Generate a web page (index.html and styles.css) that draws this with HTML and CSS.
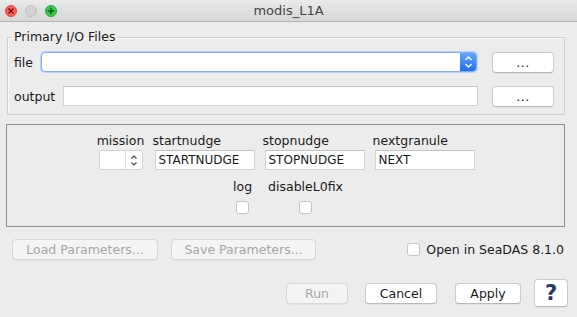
FILE: index.html
```html
<!doctype html>
<html lang="en">
<head>
  <meta charset="utf-8">
  <title>modis_L1A</title>
  <link rel="stylesheet" href="styles.css">
</head>
<body>

	<div class="window">
		<div class="titlebar">
			<div class="lights">
				<span class="light close"><svg width="8" height="8" viewBox="0 0 8 8"><path d="M1.5 1.5 L6.5 6.5 M6.5 1.5 L1.5 6.5" stroke="#6b0e0c" stroke-width="1.3"/></svg></span>
				<span class="light mini"></span>
				<span class="light zoom"><svg width="8" height="8" viewBox="0 0 8 8"><path d="M4 0.8 V7.2 M0.8 4 H7.2" stroke="#0b5a13" stroke-width="1.4"/></svg></span>
			</div>
			<div class="title">modis_L1A</div>
		</div>

		<div class="content">

			<fieldset class="group">
				<legend>Primary I/O Files</legend>
				<div class="io-row">
					<label>file</label>
					<div class="combo">
						<div class="combo-text"></div>
						<div class="combo-arrow">
							<svg width="9" height="14" viewBox="0 0 9 14"><path d="M1.5 5 L4.5 2 L7.5 5 M1.5 9 L4.5 12 L7.5 9" fill="none" stroke="#fff" stroke-width="1.4"/></svg>
						</div>
					</div>
					<button class="btn browse">...</button>
				</div>
				<div class="io-row">
					<label>output</label>
					<div class="field wide"></div>
					<button class="btn browse">...</button>
				</div>
			</fieldset>

			<div class="params">
				<div class="param-row">
					<div class="param narrow">
						<label>mission</label>
						<div class="spinner">
							<div class="spin-text"></div>
							<div class="spin-arrow">
								<svg width="8" height="13" viewBox="0 0 8 13"><path d="M1.5 4.5 L4 2 L6.5 4.5 M1.5 8.5 L4 11 L6.5 8.5" fill="none" stroke="#444" stroke-width="1.1"/></svg>
							</div>
						</div>
					</div>
					<div class="param">
						<label>startnudge</label>
						<div class="field">STARTNUDGE</div>
					</div>
					<div class="param">
						<label>stopnudge</label>
						<div class="field">STOPNUDGE</div>
					</div>
					<div class="param">
						<label>nextgranule</label>
						<div class="field">NEXT</div>
					</div>
				</div>
				<div class="param-row flags">
					<div class="flag">
						<label>log</label>
						<span class="check"></span>
					</div>
					<div class="flag">
						<label>disableL0fix</label>
						<span class="check"></span>
					</div>
				</div>
			</div>

			<div class="load-row">
				<button class="btn disabled load">Load Parameters...</button>
				<button class="btn disabled save">Save Parameters...</button>
				<div class="open-seadas">
					<span class="check"></span>
					<span>Open in SeaDAS 8.1.0</span>
				</div>
			</div>

			<div class="action-row">
				<button class="btn disabled run">Run</button>
				<button class="btn cancel">Cancel</button>
				<button class="btn apply">Apply</button>
				<button class="btn help">?</button>
			</div>

		</div>
	</div>

</body>
</html>
```

FILE: styles.css
```css
html, body {
	margin			: 0;
	padding			: 0;
}

body {
	width			: 577px;
	height			: 317px;
	background		: #ececec;
	font-family		: "DejaVu Sans", "Liberation Sans", sans-serif;
	font-size		: 12.5px;
	color			: #1a1a1a;
	overflow		: hidden;
}

/* Title bar
   =================================================================== */

.titlebar {
	height			: 21px;
	background		: linear-gradient(#ebebeb, #d6d6d6);
	border-bottom	: 1px solid #b4b4b4;
	display			: flex;
	align-items		: center;
	position		: relative;
}

.lights {
	display			: flex;
	gap				: 8px;
	padding-left	: 5px;
}

.light {
	width			: 12px;
	height			: 12px;
	border-radius	: 50%;
	box-sizing		: border-box;
	display			: flex;
	align-items		: center;
	justify-content	: center;
}

.light.close {
	background		: #fc5f57;
	border			: 1px solid #df4744;
}

.light.mini {
	background		: #d3d3d3;
	border			: 1px solid #c2c2c2;
}

.light.zoom {
	background		: #35c94a;
	border			: 1px solid #24a73a;
}

.title {
	position		: absolute;
	left			: 0;
	right			: 0;
	text-align		: center;
	font-size		: 13px;
	color			: #444;
	pointer-events	: none;
}

/* Content
   =================================================================== */

.content {
	padding			: 7px 12px 0 6px;
}

.group {
	margin			: 0 0 0 1px;
	padding			: 7px 10px 8px 6px;
	border			: 1px solid #cdcdcd;
	box-shadow		: inset 1px 1px 0 #f8f8f8;
	min-width		: 0;
}

.group legend {
	padding			: 0 2px;
	margin-left		: -2px;
	line-height		: 16px;
}

.io-row {
	display			: flex;
	align-items		: center;
	height			: 20px;
}

.io-row + .io-row {
	margin-top		: 14px;
}

.io-row label {
	margin-right	: 8px;
}

.combo {
	flex			: 1;
	height			: 20px;
	display			: flex;
	border			: 1px solid #7fb0f5;
	border-radius	: 4px;
	box-shadow		: 0 0 0 1px #b7d3fa;
	background		: #fff;
	overflow		: hidden;
	box-sizing		: border-box;
}

.combo-text {
	flex			: 1;
}

.combo-arrow {
	width			: 16px;
	background		: linear-gradient(#66a7fa, #1f6ff0);
	display			: flex;
	align-items		: center;
	justify-content	: center;
}

.field {
	height			: 20px;
	box-sizing		: border-box;
	background		: #fff;
	border			: 1px solid #d3d3d3;
	border-top-color: #c2c2c2;
	padding			: 0 3px;
	line-height		: 18px;
	font-size		: 12px;
	overflow		: hidden;
	white-space		: nowrap;
}

.field.wide {
	flex			: 1;
	margin-right	: -1px;
}

.btn {
	font-family		: inherit;
	font-size		: 12.5px;
	color			: #1a1a1a;
	background		: #fff;
	border			: 1px solid #cbcbcb;
	border-bottom-color: #b9b9b9;
	border-radius	: 4px;
	height			: 21px;
	padding			: 0;
	box-shadow		: 0 0.5px 0.5px rgba(0,0,0,0.08);
}

.btn.disabled {
	background		: #f4f4f4;
	color			: #a6a6a6;
	border-color	: #d8d8d8;
}

.btn.browse {
	width			: 62px;
	margin-left		: 15px;
	letter-spacing	: 0.5px;
}

/* Parameter panel
   =================================================================== */

.params {
	margin-top		: 9px;
	height			: 101px;
	border			: 1px solid #8f8f8f;
	display			: flex;
	flex-direction	: column;
	align-items		: center;
}

.param-row {
	display			: flex;
	gap				: 8px;
	margin-top		: 8px;
}

.param {
	display			: flex;
	flex-direction	: column;
	width			: 102px;
}

.param label {
	line-height		: 16px;
	margin-bottom	: 1px;
}

.param .field {
	width			: 100px;
	margin-left		: 2px;
	height			: 20px;
}

.param.narrow {
	width			: 48px;
	align-items		: center;
}

.spinner {
	width			: 44px;
	height			: 20px;
	box-sizing		: border-box;
	display			: flex;
	background		: #fff;
	border			: 1px solid #d3d3d3;
	border-radius	: 3px;
}

.spin-text {
	flex			: 1;
	border-right	: 1px solid #dcdcdc;
}

.spin-arrow {
	width			: 16px;
	display			: flex;
	align-items		: center;
	justify-content	: center;
}

.param-row.flags {
	gap				: 16px;
	margin-top		: 9px;
	margin-left		: 5px;
}

.flag {
	display			: flex;
	flex-direction	: column;
	align-items		: center;
}

.flag label {
	line-height		: 16px;
	margin-bottom	: 6px;
}

.check {
	display			: inline-block;
	width			: 13px;
	height			: 13px;
	box-sizing		: border-box;
	background		: #fff;
	border			: 1px solid #c4c4c4;
	border-radius	: 3px;
}

/* Bottom rows
   =================================================================== */

.load-row {
	display			: flex;
	align-items		: center;
	margin-top		: 12px;
	padding-left	: 6px;
}

.btn.load {
	width			: 146px;
}

.btn.save {
	width			: 145px;
	margin-left		: 13px;
}

.open-seadas {
	margin-left		: auto;
	margin-right	: 1px;
	display			: flex;
	align-items		: center;
	gap				: 6px;
}

.action-row {
	display			: flex;
	justify-content	: flex-end;
	align-items		: center;
	margin-top		: 19px;
	margin-right	: -3px;
}

.btn.run {
	width			: 62px;
}

.btn.cancel {
	width			: 72px;
	margin-left		: 17px;
}

.btn.apply {
	width			: 66px;
	margin-left		: 18px;
}

.btn.help {
	width			: 34px;
	height			: 28px;
	margin-left		: 13px;
	font-size		: 21px;
	font-weight		: bold;
	color			: #2b3663;
	line-height		: 26px;
}
```
